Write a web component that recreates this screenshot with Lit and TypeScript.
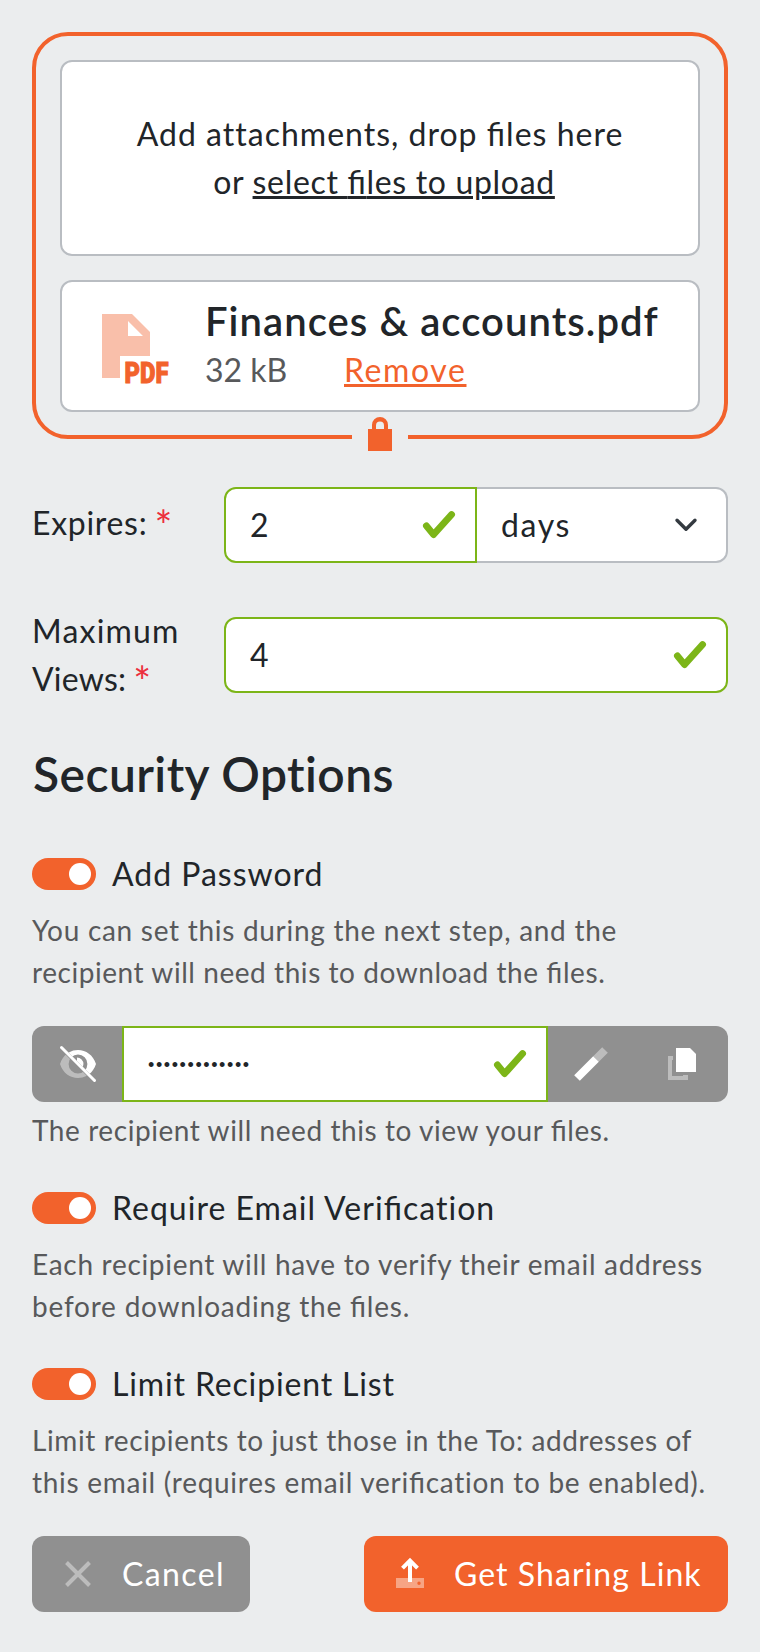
import { LitElement, html, css, svg, TemplateResult } from "lit";
import { styleMap } from "lit/directives/style-map.js";

/** A run of text with its own tracking; "fi" pairs keep their ligature. */
const t = (text: string, spacing: number): TemplateResult =>
  html`<span class="t" style=${styleMap({ letterSpacing: `${spacing}px` })}
    >${text.split(/(fi)/).map((p) => (p === "fi" ? html`<span class="lig">fi</span>` : p))}</span
  >`;

const check = html`<svg class="check" width="32" height="28" viewBox="0 0 32 28">
  <path d="M3.4 14.8 10.6 23.6 28.6 3.6" fill="none" stroke="#7cb518" stroke-width="6.8" stroke-linecap="round" stroke-linejoin="round" />
</svg>`;

const pdfIcon = html`<svg width="72" height="72" viewBox="0 0 72 72">
  <path fill="#f9bfaa" fill-rule="evenodd" d="M0 0H30L48 18V42H18V64H0ZM26 7V22H41Z" />
  <text class="pdf" x="22.500" y="68.500" textLength="44" lengthAdjust="spacingAndGlyphs">PDF</text>
</svg>`;

const lockIcon = html`<svg width="24" height="34" viewBox="0 0 24 34">
  <path d="M0 12H4V8a8 8 0 0 1 16 0V12H24V34H0ZM8 12H16V8.5a4 4 0 0 0-8 0Z" fill="#f2622c" fill-rule="evenodd" />
</svg>`;

const eyeIcon = html`<svg width="36" height="36" viewBox="0 0 36 36">
  <clipPath id="up"><path d="M2 0H36V34Z" /></clipPath>
  <clipPath id="down"><path d="M0 3V36H33Z" /></clipPath>
  ${["up", "down"].map(
    (side) => svg`<g clip-path="url(#${side})" fill="#fff" opacity=${side === "up" ? 1 : 0.4}>
      <path fill-rule="evenodd" d="M0 18C3 9 10 4 18 4s15 5 18 14c-3 9-10 14-18 14S3 27 0 18ZM18 8.600a9.400 9.400 0 1 0 0 18.800 9.400 9.400 0 0 0 0-18.800Z" />
      ${side === "up" ? svg`<path d="M17 11.500a6.500 6.500 0 1 1-.1 13Z" />` : ""}
    </g>`
  )}
  <path d="M1.500 1.500 34.500 34.500" stroke="#fff" stroke-width="3" stroke-linecap="round" />
</svg>`;

const wandIcon = html`<svg width="36" height="36" viewBox="0 0 36 36" stroke="#fff" stroke-width="8">
  <path d="M4 32 23 13" /><path d="M23 13 32 4" opacity=".4" />
</svg>`;

const copyIcon = html`<svg width="36" height="36" viewBox="0 0 36 36" fill="#fff">
  <path d="M12 2H26L32 8V26H12Z" /><path d="M4 10H9V14H8V30H19V29H24V34H4Z" opacity=".4" />
</svg>`;

const crossIcon = html`<svg width="26" height="26" viewBox="0 0 26 26">
  <path d="M1.500 1.500 24.500 24.500M24.500 1.500 1.500 24.500" stroke="#fff" stroke-width="4" opacity=".4" />
</svg>`;

const shareIcon = html`<svg width="28" height="30" viewBox="0 0 28 30">
  <path fill="#fff" fill-rule="evenodd" opacity=".42" d="M0 20H28V30H0ZM23 23.500a1.700 1.700 0 1 0 0 3.400 1.700 1.700 0 0 0 0-3.400Z" />
  <path d="M14 24V2.500M6.500 10.200 14 2.700 21.500 10.200" fill="none" stroke="#fff" stroke-width="4" />
</svg>`;

class AppToggle extends LitElement {
  static styles = css`
    :host { display: block; flex: none; width: 64px; height: 32px; }
    .track { box-sizing: border-box; display: flex; justify-content: flex-end; align-items: center; width: 64px; height: 32px; padding-right: 5px; border-radius: 16px; background: #f2622c; }
    .knob { width: 22px; height: 22px; border-radius: 50%; background: #fff; }
  `;
  render() {
    return html`<div class="track"><div class="knob"></div></div>`;
  }
}
customElements.define("app-toggle", AppToggle);

class AppRoot extends LitElement {
  static styles = css`
    :host { display: block; box-sizing: border-box; height: 1652px; padding: 32px; background: #ebedee; color: #212529; font: 400 32px/48px "Lato", sans-serif; }
    * { box-sizing: border-box; }
    svg { display: block; flex: none; overflow: visible; }
    .t { white-space: nowrap; font-variant-ligatures: none; }
    .lig { font-variant-ligatures: common-ligatures; font-feature-settings: "liga" 1; }
    .box { position: relative; display: flex; flex-direction: column; gap: 24px; height: 407px; padding: 24px; border: 4px solid #f2622c; border-radius: 36px; }
    .card { flex: none; border: 2px solid #b9bdc2; border-radius: 12px; background: #fff; }
    .drop { display: flex; flex-direction: column; justify-content: center; align-items: center; height: 196px; }
    .second { padding-left: 8px; }
    .link { text-decoration: underline; text-decoration-thickness: 3px; text-underline-offset: 2px; }
    .file { display: flex; height: 132px; padding: 15px 0 0 40px; }
    .file svg { margin-top: 17px; }
    .info { padding-left: 31px; }
    .name { font-size: 40px; font-weight: 600; }
    .meta { display: grid; grid-template-columns: 139px auto; padding-top: 1px; color: #58595b; }
    .remove { color: #f2622c; }
    .lock { position: absolute; left: 316px; bottom: -16px; width: 56px; display: flex; justify-content: center; background: #ebedee; }
    .row { display: grid; grid-template-columns: 192px 1fr; align-items: center; }
    .expires { margin: 48px 0 44px; }
    .expires .label { padding-bottom: 4px; }
    .req { margin-left: -1px; color: #ec2f3c; font-size: 42px; line-height: 0; vertical-align: -6px; }
    .group { display: flex; height: 76px; }
    .input { display: flex; flex: 1; align-items: center; justify-content: space-between; height: 76px; padding: 0 20px 0 24px; border: 2px solid #7cb518; background: #fff; border-radius: 12px; }
    .first { flex: none; width: 253px; border-radius: 12px 0 0 12px; }
    .select { border-color: #b9bdc2; border-left: 0; border-radius: 0 12px 12px 0; padding: 0 29px 0 24px; }
    h2 { margin: 43px 0 48px; padding-left: 1px; font-size: 48px; line-height: 56px; font-weight: 600; }
    .option { display: flex; align-items: center; gap: 16px; height: 48px; margin-bottom: 11px; }
    .note { font-size: 28px; line-height: 42px; color: #58595b; margin-bottom: 33px; }
    .password { border-radius: 12px; background: #909090; margin-bottom: 7px; }
    .password .input { border-radius: 0; }
    .tool { display: flex; align-items: center; width: 90px; padding-left: 26px; }
    .wand { padding-left: 25px; }
    .eye { padding-left: 28px; }
    .dots { padding: 2px 0 0; font-family: "Liberation Sans", sans-serif; font-size: 18px; }
    .actions { display: flex; justify-content: space-between; }
    .btn { display: flex; align-items: center; height: 76px; border-radius: 12px; color: #fff; background: #909090; }
    .cancel { width: 218px; padding-left: 33px; gap: 31px; }
    .share { width: 364px; padding-left: 32px; gap: 30px; background: #f2622c; }
    .share svg { margin-bottom: 2px; }
    .pdf { font: 900 29px Roboto, sans-serif; fill: #f2622c; stroke: #f2622c; stroke-width: 1; }
  `;

  private option(label: TemplateResult, notes: TemplateResult[]) {
    return html`<div class="option"><app-toggle></app-toggle>${label}</div>
      <div class="note">${notes.map((n) => html`<div>${n}</div>`)}</div>`;
  }

  render() {
    return html`
      <div class="box">
        <div class="card drop">
          <div>${t("Add attachments, drop files here", 1.01)}</div>
          <div class="second">${t("or ", 0.7)}<span class="link">${t("select files to upload", 0.68)}</span></div>
        </div>
        <div class="card file">
          ${pdfIcon}
          <div class="info">
            <div class="name">${t("Finances & accounts.pdf", 1.05)}</div>
            <div class="meta">${t("32 kB", 0)}<span class="link remove">${t("Remove", 1.6)}</span></div>
          </div>
        </div>
        <div class="lock">${lockIcon}</div>
      </div>
      <div class="row expires">
        <div class="label">${t("Expires:", 0.7)} <span class="req">*</span></div>
        <div class="group">
          <div class="input first">${t("2", 0)}${check}</div>
          <div class="input select">
            ${t("days", 1.6)}
            <svg width="22" height="14" viewBox="0 0 22 14"><path d="M2 2.200 11 11.200 20 2.200" fill="none" stroke="#343a40" stroke-width="3.400" stroke-linecap="round" stroke-linejoin="round" /></svg>
          </div>
        </div>
      </div>
      <div class="row">
        <div>${t("Maximum", 1.2)}<br />${t("Views:", 0.2)} <span class="req">*</span></div>
        <div class="input">${t("4", 0)}${check}</div>
      </div>
      <h2>${t("Security Options", 0.42)}</h2>
      ${this.option(t("Add Password", 0.98), [
        t("You can set this during the next step, and the", 0.71),
        t("recipient will need this to download the files.", 0.56),
      ])}
      <div class="group password">
        <div class="tool eye">${eyeIcon}</div>
        <div class="input"><span class="dots">${t("•••••••••••••", 1.6)}</span>${check}</div>
        <div class="tool wand">${wandIcon}</div>
        <div class="tool">${copyIcon}</div>
      </div>
      <div class="note">${t("The recipient will need this to view your files.", 0.57)}</div>
      ${this.option(t("Require Email Verification", 1.01), [
        t("Each recipient will have to verify their email address", 0.7),
        t("before downloading the files.", 0.79),
      ])}
      ${this.option(t("Limit Recipient List", 0.85), [
        t("Limit recipients to just those in the To: addresses of", 0.6),
        t("this email (requires email verification to be enabled).", 0.72),
      ])}
      <div class="actions">
        <div class="btn cancel">${crossIcon}${t("Cancel", 1.4)}</div>
        <div class="btn share">${shareIcon}${t("Get Sharing Link", 1.06)}</div>
      </div>
    `;
  }
}
customElements.define("app-root", AppRoot);
